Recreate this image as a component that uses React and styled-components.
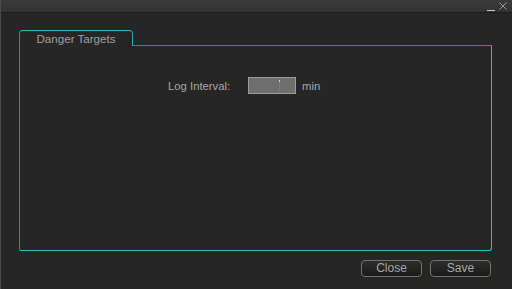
import React from "react";
import styled, { createGlobalStyle } from "styled-components";

const Global = createGlobalStyle`
  html, body { margin: 0; padding: 0; background: #262626; }
  body { font-family: "Liberation Sans", Arial, sans-serif; }
`;

const Window = styled.div`
  width: 512px;
  height: 289px;
  box-sizing: border-box;
  background: #262626;
  border-left: 1px solid #4a4a4a;
  display: flex;
  flex-direction: column;
  overflow: hidden;
`;

const TitleBar = styled.div`
  height: 12px;
  flex: none;
  background: linear-gradient(#3b3b3b, #323232);
  border-bottom: 1px solid #1b1b1b;
  display: flex;
  justify-content: flex-end;
  align-items: flex-start;
  padding-right: 5px;
  gap: 4px;
`;

const Content = styled.div`
  flex: 1;
  display: flex;
  flex-direction: column;
  padding: 17px 20px 0 18px;
`;

const Tab = styled.div`
  position: relative;
  z-index: 1;
  width: 114px;
  height: 16px;
  box-sizing: border-box;
  margin-bottom: -1px;
  background: #262626;
  border: 1px solid #2d8f9a;
  border-top-color: #27bccb;
  border-right-color: #2aa6b4;
  border-bottom: none;
  border-radius: 4px 4px 0 0;
  color: #a0a0a0;
  font-size: 11.6px;
  line-height: 15px;
  text-align: center;
`;

const Panel = styled.div`
  height: 206px;
  box-sizing: border-box;
  border: 1px solid #2b8c97;
  border-bottom-color: #22c3d4;
  border-right-color: #22c3d4;
  border-radius: 0 0 3px 2px;
  padding: 31px 0 0 148px;
`;

const FieldRow = styled.div`
  display: flex;
  align-items: center;
  height: 17px;
`;

const Label = styled.span`
  color: #a6a6a6;
  font-size: 11.3px;
  width: 80px;
`;

const Input = styled.div`
  position: relative;
  width: 48px;
  height: 17px;
  box-sizing: border-box;
  background: #6e6e6e;
  border: 1px solid #9c9c9c;
`;

const Caret = styled.div`
  position: absolute;
  left: 30px;
  top: 2px;
  width: 1px;
  height: 11px;
  background: linear-gradient(#d0d0d0 0, #d0d0d0 2px, #7c7c7c 2px);
`;

const Unit = styled.span`
  color: #a6a6a6;
  font-size: 11.3px;
  margin-left: 6px;
`;

const ButtonRow = styled.div`
  display: flex;
  justify-content: flex-end;
  gap: 8px;
  margin-top: 9px;
  padding-right: 1px;
`;

const Button = styled.button`
  width: 61px;
  height: 17px;
  box-sizing: border-box;
  padding: 0;
  border: 1px solid #77735c;
  border-radius: 4px;
  background: linear-gradient(#2e2e2e, #1a1a1a);
  color: #a6a6a6;
  font-family: "Liberation Sans", Arial, sans-serif;
  font-size: 12px;
  line-height: 15px;
`;

const Icon = styled.svg`
  display: block;
`;

export default function App() {
  return (
    <>
      <Global />
      <Window>
        <TitleBar>
          <Icon width="8" height="12" viewBox="0 0 8 12">
            <line x1="0" y1="10.5" x2="8" y2="10.5" stroke="#c8c8c8" strokeWidth="1" />
          </Icon>
          <Icon width="8" height="12" viewBox="0 0 8 12">
            <path d="M0.5 2.5 L7.5 9.5 M7.5 2.5 L0.5 9.5" stroke="#9a9a9a" strokeWidth="1" fill="none" />
          </Icon>
        </TitleBar>
        <Content>
          <Tab>Danger Targets</Tab>
          <Panel>
            <FieldRow>
              <Label>Log Interval:</Label>
              <Input>
                <Caret />
              </Input>
              <Unit>min</Unit>
            </FieldRow>
          </Panel>
          <ButtonRow>
            <Button>Close</Button>
            <Button>Save</Button>
          </ButtonRow>
        </Content>
      </Window>
    </>
  );
}
